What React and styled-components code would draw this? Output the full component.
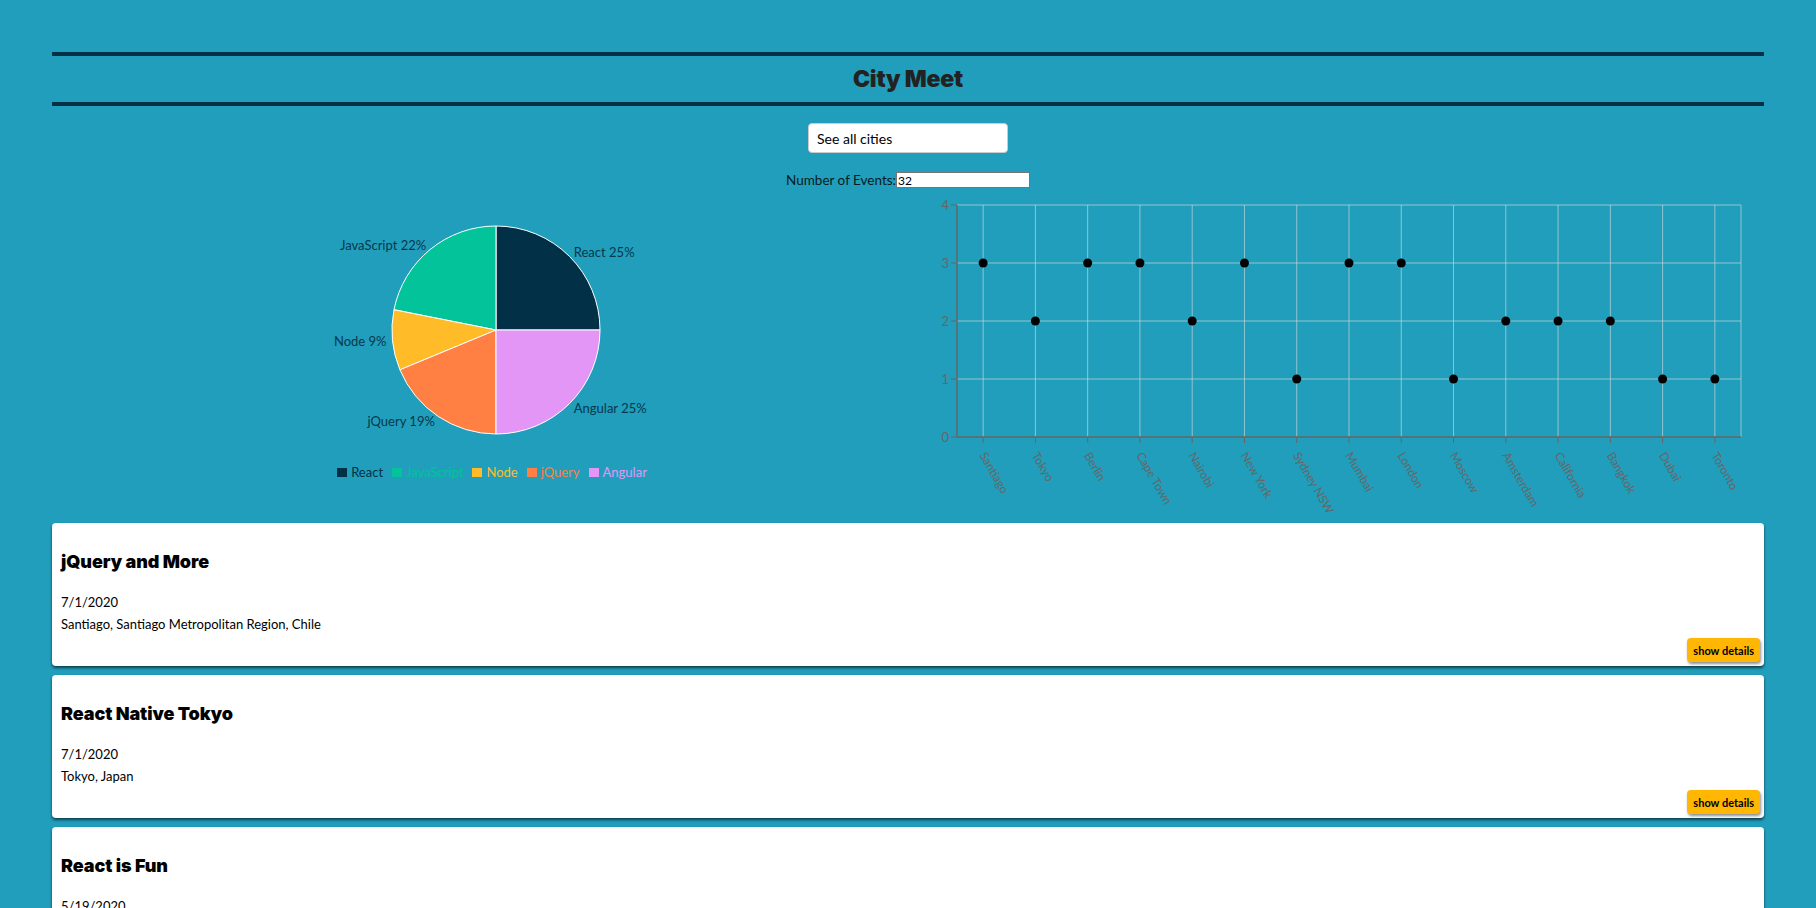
import React from "react";
import styled, { createGlobalStyle } from "styled-components";

const GlobalStyle = createGlobalStyle`
  body {
    margin: 0;
    background: #219ebc;
    font-family: Lato, "Noto Sans", sans-serif;
  }
`;

const Page = styled.div`
  padding: 52px 52px 0;
`;

const Header = styled.header`
  border-top: 4px solid #023047;
  border-bottom: 4px solid #023047;
  height: 46px;
  display: flex;
  align-items: center;
  justify-content: center;
`;

const Title = styled.h1`
  margin: 0;
  font-family: Inter, "Noto Sans", sans-serif;
  font-size: 23px;
  font-weight: 900;
  color: #222;
  letter-spacing: -0.2px;
`;

const Controls = styled.div`
  display: flex;
  flex-direction: column;
  align-items: center;
`;

const CitySearch = styled.input`
  box-sizing: border-box;
  width: 200px;
  height: 30px;
  margin-top: 17px;
  padding: 0 8px;
  border: 1px solid #ccc;
  border-radius: 4px;
  font-family: inherit;
  font-size: 14px;
  font-weight: 400;
  color: #000;
  &::placeholder {
    color: #000;
  }
`;

const EventsRow = styled.label`
  display: flex;
  align-items: center;
  margin-top: 19px;
  font-size: 13.5px;
  color: #0a1a20;
`;

const EventsInput = styled.input`
  box-sizing: border-box;
  width: 134px;
  height: 16px;
  margin: 0;
  padding: 0 1px;
  border: 1px solid #767676;
  font-family: inherit;
  font-size: 12px;
`;

const ChartsRow = styled.div`
  display: flex;
  height: 333px;
  margin-top: 2px;
`;

const ChartBox = styled.div`
  flex: 1;
  display: flex;
  flex-direction: column;
`;

const Legend = styled.ul`
  display: flex;
  justify-content: center;
  gap: 9px;
  margin: 5px 0 0;
  padding: 0 0 0 24px;
  list-style: none;
`;

const LegendItem = styled.li`
  display: flex;
  align-items: center;
  font-size: 13px;
  color: ${(p) => p.$color};
`;

const Swatch = styled.span`
  width: 10px;
  height: 9px;
  margin-right: 4px;
  background: ${(p) => p.$color};
`;

const EventList = styled.ul`
  display: flex;
  flex-direction: column;
  gap: 9px;
  margin: 0;
  padding: 0;
  list-style: none;
`;

const Card = styled.li`
  background: #fff;
  border-radius: 4px;
  box-shadow: 0 2px 3px rgba(0, 0, 0, 0.6);
  padding: 0 4px 4px 9px;
`;

const EventName = styled.h2`
  margin: 28px 0 18px;
  font-family: Inter, "Noto Sans", sans-serif;
  font-size: 18px;
  line-height: 22px;
  font-weight: 900;
  letter-spacing: -0.1px;
  color: #000;
`;

const EventLine = styled.p`
  margin: 0;
  font-size: 13px;
  line-height: 22px;
  color: #000;
`;

const CardFooter = styled.div`
  display: flex;
  justify-content: flex-end;
  margin-top: 3px;
`;

const DetailsButton = styled.button`
  height: 24px;
  padding: 0 6px;
  border: none;
  border-radius: 4px;
  background: #ffb703;
  box-shadow: 1px 2px 3px rgba(0, 0, 0, 0.45);
  font-family: inherit;
  font-size: 11px;
  font-weight: 700;
  color: #000;
`;

const genres = [
  { name: "React", value: 8, color: "#023047" },
  { name: "JavaScript", value: 7, color: "#02c39a" },
  { name: "Node", value: 3, color: "#ffbb28" },
  { name: "jQuery", value: 6, color: "#ff8042" },
  { name: "Angular", value: 8, color: "#e396f5" },
];

const cities = [
  ["Santiago", 3], ["Tokyo", 2], ["Berlin", 3], ["Cape Town", 3], ["Nairobi", 2],
  ["New York", 3], ["Sydney NSW", 1], ["Mumbai", 3], ["London", 3], ["Moscow", 1],
  ["Amsterdam", 2], ["California", 2], ["Bangkok", 2], ["Dubai", 1], ["Toronto", 1],
];

const events = [
  { name: "jQuery and More", date: "7/1/2020", location: "Santiago, Santiago Metropolitan Region, Chile" },
  { name: "React Native Tokyo", date: "7/1/2020", location: "Tokyo, Japan" },
  { name: "React is Fun", date: "5/19/2020", location: "Berlin, Germany" },
];

const rad = (d) => (d * Math.PI) / 180;

const GenrePie = () => {
  const cx = 444, cy = 140, r = 104;
  const total = genres.reduce((s, g) => s + g.value, 0);
  let start = 0;
  const slices = genres.map((g) => {
    const end = start + (g.value / total) * 360;
    const p0 = [cx + r * Math.cos(rad(start)), cy - r * Math.sin(rad(start))];
    const p1 = [cx + r * Math.cos(rad(end)), cy - r * Math.sin(rad(end))];
    const large = end - start > 180 ? 1 : 0;
    const mid = (start + end) / 2;
    const lx = cx + 110 * Math.cos(rad(mid));
    const ly = cy - 110 * Math.sin(rad(mid));
    const s = {
      ...g,
      d: `M${cx},${cy} L${p0[0]},${p0[1]} A${r},${r} 0 ${large} 0 ${p1[0]},${p1[1]} Z`,
      lx, ly,
      anchor: Math.cos(rad(mid)) >= 0 ? "start" : "end",
      pct: Math.round((g.value / total) * 100),
    };
    start = end;
    return s;
  });

  return (
    <svg width="856" height="269">
      {slices.map((s) => (
        <path key={s.name} d={s.d} fill={s.color} stroke="#fff" strokeWidth="1" />
      ))}
      {slices.map((s) => (
        <text key={s.name} x={s.lx} y={s.ly} textAnchor={s.anchor} dominantBaseline="central"
          fontSize="13" fill="#05384c">
          {s.name} {s.pct}%
        </text>
      ))}
    </svg>
  );
};

const CityScatter = () => {
  const left = 49, right = 833, top = 15, bottom = 247;
  const step = (right - left) / cities.length;
  const yOf = (v) => bottom - ((bottom - top) / 4) * v;
  const xs = cities.map((_, i) => left + step * (i + 0.5));

  return (
    <svg width="857" height="333">
      <g stroke="#ddd" strokeOpacity="0.6">
        {[1, 2, 3, 4].map((v) => (
          <line key={v} x1={left} x2={right} y1={yOf(v)} y2={yOf(v)} />
        ))}
        {xs.map((x, i) => (
          <line key={i} x1={x} x2={x} y1={top} y2={bottom} />
        ))}
        <line x1={right} x2={right} y1={top} y2={bottom} />
      </g>
      <g stroke="#666">
        <line x1={left} x2={left} y1={top} y2={bottom} strokeWidth="1.5" />
        <line x1={left} x2={right} y1={bottom} y2={bottom} strokeWidth="1.5" />
        {[0, 1, 2, 3, 4].map((v) => (
          <line key={v} x1={left - 6} x2={left} y1={yOf(v)} y2={yOf(v)} />
        ))}
        {xs.map((x, i) => (
          <line key={i} x1={x} x2={x} y1={bottom} y2={bottom + 6} />
        ))}
      </g>
      {[0, 1, 2, 3, 4].map((v) => (
        <text key={v} x={left - 8} y={yOf(v)} textAnchor="end" dominantBaseline="central"
          fontSize="13" fill="#666">
          {v}
        </text>
      ))}
      {cities.map(([name], i) => (
        <text key={name} transform={`translate(${xs[i]}, ${bottom + 16}) rotate(60)`}
          fontSize="12" fill="#666" dominantBaseline="central">
          {name}
        </text>
      ))}
      {cities.map(([name, v], i) => (
        <circle key={name} cx={xs[i]} cy={yOf(v)} r="4.5" fill="#000" />
      ))}
    </svg>
  );
};

const App = () => {
  return (
    <Page>
      <GlobalStyle />
      <Header>
        <Title>City Meet</Title>
      </Header>
      <Controls>
        <CitySearch type="text" placeholder="See all cities" />
        <EventsRow>
          Number of Events:
          <EventsInput type="number" defaultValue={32} />
        </EventsRow>
      </Controls>
      <ChartsRow>
        <ChartBox>
          <GenrePie />
          <Legend>
            {genres.map((g) => (
              <LegendItem key={g.name} $color={g.color}>
                <Swatch $color={g.color} />
                {g.name}
              </LegendItem>
            ))}
          </Legend>
        </ChartBox>
        <ChartBox>
          <CityScatter />
        </ChartBox>
      </ChartsRow>
      <EventList>
        {events.map((e) => (
          <Card key={e.name}>
            <EventName>{e.name}</EventName>
            <EventLine>{e.date}</EventLine>
            <EventLine>{e.location}</EventLine>
            <CardFooter>
              <DetailsButton>show details</DetailsButton>
            </CardFooter>
          </Card>
        ))}
      </EventList>
    </Page>
  );
};

export default App;
